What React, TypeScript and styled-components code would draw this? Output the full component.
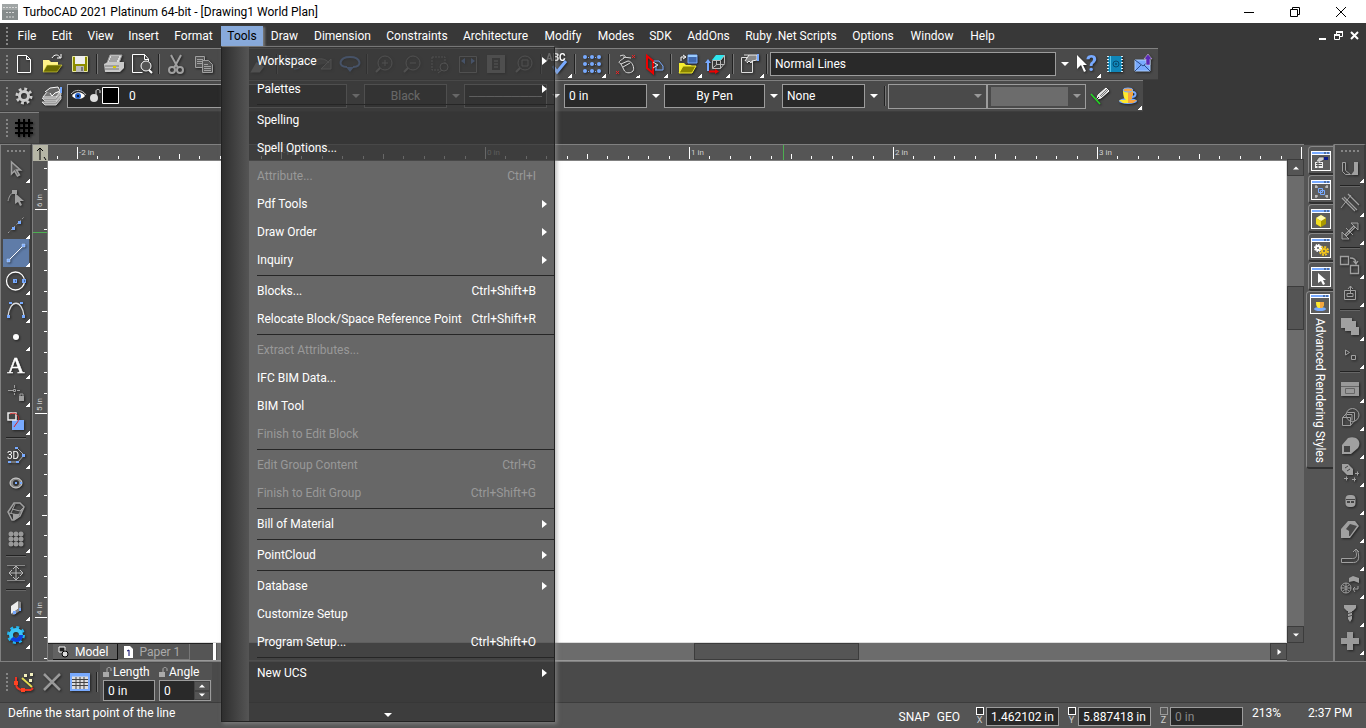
import React, { useState } from "react";
import styled, { createGlobalStyle, css } from "styled-components";

const c = {
  chrome: "#383838",
  bar: "#4a4a4a",
  panel: "#555555",
  line: "#808080",
  field: "#292929",
  fieldLine: "#9c9c9c",
  blue: "#78aaff",
  grey: "#a0a0a0",
};

const Global = createGlobalStyle`
  *, *::before, *::after { box-sizing: border-box; }
  html, body, #root { height: 100%; margin: 0; }
  body { overflow: hidden; background: ${c.chrome}; }
  body, button, input, select { font-family: Roboto, "Open Sans", sans-serif; font-size: 12px; line-height: 16px; color: #fff; }
  button { border: 0; padding: 0; background: none; }
  input, select { border-radius: 0; margin: 0; outline: 0; appearance: none; }
`;

const Shell = styled.div`
  display: flex;
  flex-direction: column;
  height: 100vh;
  overflow: hidden;
`;

/* ---------- title and menu bars ---------- */
const TitleBar = styled.header`
  display: flex;
  align-items: center;
  flex: none;
  height: 23px;
  padding: 0 2px;
  gap: 5px;
  background: #fff;
  color: #000;
`;
const Title = styled.h1`
  flex: 1;
  margin: 0;
  font-size: 12px;
  line-height: 16px;
  font-weight: 400;
`;
const WindowButtons = styled.div`
  display: flex;
`;
const WindowButton = styled.button<{ $w: number }>`
  display: grid;
  place-items: center;
  width: ${(p) => p.$w}px;
  height: 20px;
  color: inherit;
`;
const MenuBar = styled.nav`
  display: flex;
  align-items: center;
  flex: none;
  height: 25px;
  padding-right: 4px;
  background: ${c.chrome};
`;
const MenuSlot = styled.div`
  position: relative;
`;
const MenuButton = styled.button<{ $w: number; $open?: boolean }>`
  width: ${(p) => p.$w}px;
  height: 20px;
  text-align: center;
  white-space: nowrap;
  ${(p) =>
    p.$open &&
    css`
      background: #88aadb;
      color: #000;
      box-shadow: 2px 1px 2px #777;
    `}
`;
const Spacer = styled.div`
  flex: 1;
`;

const Menu = styled.div`
  position: absolute;
  z-index: 10;
  top: 20px;
  left: 0;
  width: 334px;
  display: flex;
  border: 1px solid #222;
  border-top-color: #777;
  box-shadow: 2px 2px 4px rgba(150, 150, 150, 0.6);
`;
const MenuGutter = styled.div`
  width: 27px;
  background: linear-gradient(90deg, #2e2e2e, #555);
`;
const MenuList = styled.ul`
  flex: 1;
  margin: 0;
  padding: 1px 0 0;
  list-style: none;
  background: rgba(54, 54, 54, 0.757);
`;
const MenuRow = styled.li`
  display: flex;
`;
const MenuItem = styled.button`
  flex: 1;
  display: flex;
  align-items: center;
  justify-content: space-between;
  height: 28px;
  padding: 0 6px 2px 8px;
  text-align: left;
  white-space: nowrap;
  &:disabled { color: #999; }
`;
const Shortcut = styled.span`
  padding-right: 12px;
`;
const MenuRule = styled.li`
  height: 3px;
  margin-left: 8px;
  border-top: 1px solid #262626;
`;
const MenuMore = styled.button`
  display: flex;
  align-items: flex-end;
  justify-content: center;
  width: 100%;
  height: 33px;
  padding: 0 28px 2px 0;
`;

/* ---------- toolbars ---------- */
const Toolbars = styled.div`
  display: flex;
  flex-direction: column;
  align-items: flex-start;
  flex: none;
  height: 96px;
`;
const Toolbar = styled.div`
  display: flex;
  align-items: center;
  height: 32px;
  padding-right: 1px;
  border-top: 1px solid ${c.line};
  border-bottom: 1px solid #3e3e3e;
  background: ${c.bar};
`;
const Grip = styled.span<{ $across?: boolean }>`
  flex: none;
  ${(p) =>
    p.$across
      ? css`
          width: 18px;
          height: 2px;
          margin: 5px 5px 3px;
          background: repeating-linear-gradient(90deg, #858585 0 2px, transparent 2px 4px);
        `
      : css`
          width: 2px;
          height: 18px;
          margin: 0 2px 0 6px;
          background: repeating-linear-gradient(#858585 0 2px, transparent 2px 4px);
        `}
`;
const ToolSlot = styled.button<{ $active?: boolean }>`
  position: relative;
  display: grid;
  place-items: center;
  flex: none;
  width: 28px;
  height: 28px;
  ${(p) =>
    p.$active &&
    css`
      background: #5f7ca8;
      background-clip: content-box;
      padding: 0 1px;
    `}
`;
const Corner = styled.i`
  position: absolute;
  right: 0;
  bottom: 0;
  width: 4px;
  height: 4px;
  background: linear-gradient(135deg, transparent 50%, #fff 50%);
`;
const Divider = styled.span<{ $across?: boolean }>`
  flex: none;
  ${(p) =>
    p.$across
      ? css`
          width: 20px;
          height: 2px;
          margin: 2px 4px;
          border-top: 1px solid #222;
          border-bottom: 1px solid #666;
        `
      : css`
          width: 2px;
          height: 20px;
          margin: 0 2px;
          border-left: 1px solid #222;
          border-right: 1px solid #777;
        `}
`;
const Field = styled.select<{ $w: number; $center?: boolean }>`
  width: ${(p) => p.$w}px;
  height: 24px;
  padding: 0 4px;
  border: 1px solid ${c.fieldLine};
  background: ${c.field};
  text-align-last: ${(p) => (p.$center ? "center" : "left")};
`;
const ArrowBox = styled.span<{ $dim?: boolean }>`
  display: grid;
  place-items: center;
  width: 17px;
  height: 24px;
  flex: none;
  color: ${(p) => (p.$dim ? "#999" : "#fff")};
`;
const LayerField = styled.div`
  display: flex;
  align-items: center;
  width: 280px;
  height: 24px;
  gap: 1px;
  margin-left: 1px;
  padding-left: 2px;
  border: 1px solid ${c.fieldLine};
  background: ${c.field};
`;
const LayerSelect = styled.select`
  flex: 1;
  height: 22px;
  padding: 0 8px;
  border: 0;
  background: transparent;
`;
const Boxed = styled.div`
  display: flex;
  align-items: center;
  width: 99px;
  height: 25px;
  padding-left: 3px;
  border: 1px solid ${c.fieldLine};
`;
const BoxedSelect = styled.select<{ $fill?: boolean }>`
  flex: 1;
  min-width: 0;
  height: 19px;
  border: 0;
  background: ${(p) => (p.$fill ? "#7a7a7a" : "transparent")};
`;

/* ---------- work area ---------- */
const Work = styled.div`
  display: flex;
  flex: 1;
  min-height: 0;
`;
const SideBar = styled.div`
  display: flex;
  flex-direction: column;
  align-items: center;
  flex: none;
  width: 32px;
  padding-left: 1px;
  border-top: 1px solid ${c.line};
  border-left: 1px solid ${c.line};
  border-right: 2px solid #3c3c3c;
  background: ${c.bar};
`;
const Drawing = styled.main`
  display: grid;
  flex: 1;
  min-width: 0;
  grid-template-columns: 15px 1fr 17px;
  grid-template-rows: 16px 1fr 18px;
  border-top: 1px solid ${c.line};
  border-left: 1px solid ${c.line};
  background: ${c.panel};
`;
const RulerCorner = styled.div`
  display: grid;
  place-items: center;
  background: #b5b5a5;
`;
const RulerTop = styled.div`
  grid-column: 2 / 4;
  overflow: hidden;
  border-bottom: 1px solid ${c.line};
`;
const RulerLeft = styled.div`
  grid-row: 2 / 4;
  overflow: hidden;
  border-right: 1px solid ${c.line};
`;
const Canvas = styled.div`
  background: #fff;
  border-right: 1px solid #ddd;
  border-bottom: 1px solid #ddd;
`;
const ScrollV = styled.div`
  display: flex;
  flex-direction: column;
  margin-top: -2px;
  background: #6c6c6c;
`;
const ScrollButton = styled.button`
  display: grid;
  place-items: center;
  flex: none;
  width: 17px;
  height: 17px;
  border: 1px solid #3c3c3c;
  background: ${c.panel};
`;
const ThumbV = styled.div`
  flex: none;
  height: 44px;
  border: 1px solid #3c3c3c;
  background: ${c.panel};
`;
const ThumbH = styled.div`
  flex: none;
  width: 165px;
  border: 1px solid #3c3c3c;
  background: ${c.panel};
`;
const Grow = styled.div<{ $n: number }>`
  flex: ${(p) => p.$n};
`;
const SheetBar = styled.div`
  display: flex;
  min-width: 0;
  border-bottom: 1px solid #999;
`;
const SheetTabs = styled.div`
  display: flex;
  align-items: flex-start;
  width: 165px;
  padding-left: 5px;
  border-top: 1px solid #222;
`;
const SheetTab = styled.button<{ $on?: boolean }>`
  display: flex;
  align-items: center;
  gap: 4px;
  height: 16px;
  padding: 0 9px 0 4px;
  border-right: 1px solid ${(p) => (p.$on ? "#111" : "#777")};
  border-bottom: 1px solid ${(p) => (p.$on ? "#111" : "#777")};
  background: ${(p) => (p.$on ? "#626262" : c.panel)};
  color: ${(p) => (p.$on ? "#fff" : "#aaa")};
`;
const Splitter = styled.div`
  width: 3px;
  margin-right: 1px;
  background: #fff;
`;
const ScrollH = styled.div`
  display: flex;
  flex: 1;
  background: #6c6c6c;
`;

const PaletteRail = styled.div`
  display: flex;
  flex-direction: column;
  align-items: flex-end;
  flex: none;
  width: 30px;
  padding-top: 1px;
  border-top: 1px solid #3c3c3c;
  border-right: 1px solid ${c.line};
  background: ${c.panel};
`;
const PaletteTab = styled.button<{ $on?: boolean }>`
  display: flex;
  align-items: center;
  gap: 4px;
  flex: none;
  writing-mode: vertical-rl;
  width: ${(p) => (p.$on ? 27 : 25)}px;
  height: ${(p) => (p.$on ? 178 : 29)}px;
  padding-top: ${(p) => (p.$on ? 2 : 4)}px;
  border-top: 1px solid #888;
  border-left: 1px solid #888;
  border-bottom: 2px solid #303030;
  border-radius: 4px 0 0 4px;
  white-space: nowrap;
`;

/* ---------- inspector and status ---------- */
const Inspector = styled.div`
  display: flex;
  align-items: center;
  flex: none;
  height: 42px;
  border-top: 1px solid ${c.line};
  border-bottom: 1px solid #3c3c3c;
  background: ${c.bar};
`;
const Params = styled.div`
  display: flex;
  gap: 4px;
  height: 38px;
  padding: 1px 1px 0 3px;
  background: #525252;
`;
const Param = styled.label`
  display: flex;
  flex-direction: column;
  width: 52px;
`;
const ParamName = styled.span`
  display: flex;
  align-items: center;
  gap: 1px;
  height: 16px;
  white-space: nowrap;
`;
const ParamBox = styled.span`
  display: flex;
  height: 21px;
  border: 1px solid ${c.fieldLine};
  background: ${c.field};
`;
const BareInput = styled.input`
  flex: 1;
  min-width: 0;
  padding: 0 4px;
  border: 0;
  background: transparent;
`;
const Spin = styled.span`
  display: flex;
  flex-direction: column;
  width: 16px;
  background: ${c.panel};
`;
const SpinHalf = styled.span`
  display: grid;
  flex: 1;
  place-items: center;
  border: 1px solid #444;
`;
const StatusBar = styled.footer`
  display: flex;
  align-items: flex-start;
  flex: none;
  height: 25px;
  padding: 2px 16px 0 8px;
  background: ${c.panel};
`;
const StatusMode = styled.button`
  height: 22px;
  margin: 1px 7px 0 0;
`;
const Coord = styled.div`
  display: flex;
  gap: 2px;
  margin: 2px 0 0 8px;
  height: 20px;
`;
const CoordLock = styled.label`
  display: flex;
  flex-direction: column;
  align-items: center;
  width: 9px;
  font-size: 9px;
  line-height: 10px;
  color: #ccc;
`;
const Check = styled.input`
  flex: none;
  width: 8px;
  height: 8px;
  border: 1px solid #fff;
  background: #333;
  &:disabled { border-color: #999; background: none; }
`;
const CoordInput = styled.input`
  width: 73px;
  height: 19px;
  padding: 0 4px;
  border: 1px solid ${c.fieldLine};
  background: ${c.field};
  &:disabled { color: #888; }
`;
const Zoom = styled.span`
  width: 56px;
  margin-left: 9px;
`;
const Clock = styled.span`
  width: 42px;
  white-space: nowrap;
`;

/* ---------- drawings ---------- */
const Glyph = styled.svg`
  display: block;
  flex: none;
  overflow: visible;
  filter: drop-shadow(1px 1px 1px rgba(0, 0, 0, 0.55));
`;
const Plain = styled.svg`
  display: block;
  flex: none;
`;

const B = c.blue;
const G = c.grey;
const mag = (
  <>
    <circle cx="13" cy="11" r="7" stroke={G} fill="none" />
    <path d="M8 16L4 20" stroke={G} strokeWidth="2" />
  </>
);
const icons: Record<string, React.ReactNode> = {
  new: <path d="M5.500 3.500h9l4 4v13h-13zM14.500 3.500v4h4" fill="none" stroke="#fff" />,
  open: (
    <>
      <path d="M3 20V8h6l2 2h7v4" fill="#fff38a" />
      <path d="M3 20l4-7h15l-5 7z" fill="#6b6b00" stroke="#e8e04a" strokeWidth=".6" />
      <path d="M12 6c2-4 7-4 8 0M17 6h4V2" fill="none" stroke="#fff" />
    </>
  ),
  save: (
    <>
      <path d="M4.500 4.500h15v15h-15z" fill="#8c8c00" stroke="#e9e9a0" />
      <path d="M7 4h10v8H7z" fill="#eee" />
      <path d="M8 14h8v6H8z" fill="#bbb" />
      <path d="M13 15h2v4h-2z" fill="#777" />
    </>
  ),
  print: (
    <>
      <path d="M8 3h12l-3 8H5z" fill="#ddd" stroke="#999" />
      <path d="M9 5h8M8 7h8M7 9h8" stroke="#666" />
      <path d="M2 12l4-2h16v6l-4 4H3z" fill="#c9c9c9" />
      <path d="M3 14h14M3 17h14" stroke="#777" />
      <path d="M11 15h3" stroke="#d8c800" strokeWidth="2" />
    </>
  ),
  preview: (
    <>
      <path d="M18.500 9V7l-4-4.500h-12v18h10M14.500 2.500v5h4" fill="none" stroke="#fff" />
      <circle cx="16" cy="14" r="5" fill="#555" stroke="#fff" />
      <path d="M19 18l3 3" stroke="#fff" strokeWidth="2" />
    </>
  ),
  cut: (
    <>
      <path d="M7 3l7 13M17 3l-7 13" stroke={G} strokeWidth="2" />
      <circle cx="8" cy="18" r="3" fill="none" stroke={G} strokeWidth="2" />
      <circle cx="16" cy="18" r="3" fill="none" stroke={G} strokeWidth="2" />
    </>
  ),
  copy: (
    <>
      <path d="M3.500 4.500h9v11h-9z" fill="#555" stroke={G} />
      <path d="M5 7.500h6M5 9.500h6M5 11.500h6" stroke={G} />
      <path d="M10.500 8.500h6l4 4v8h-10z" fill="#555" stroke={G} />
      <path d="M12 12.500h4M12 14.500h7M12 16.500h7M12 18.500h7" stroke={G} />
    </>
  ),
  paste: <path d="M5 5h12v15H5zM8 3h6v4H8z" fill="none" stroke={G} />,
  brush: <path d="M20 4l-8 8M5 19l4-7 5 3-3 4z" fill={G} stroke={G} strokeWidth="3" />,
  undo: <path d="M4 10c4-6 16-6 16 1 0 4-4 6-8 6M4 3v8h8" fill="none" stroke={B} />,
  redo: <path d="M3 14c0-9 12-9 16-3M21 7v10H11z" fill={G} fillOpacity=".4" stroke={G} />,
  loop: (
    <>
      <path d="M9 15C-1 15 1 5 12 5s13 10 3 10" fill="none" stroke={B} strokeWidth="2" />
      <path d="M8 15h8l-4 5z" fill={B} />
    </>
  ),
  zoomIn: <>{mag}<path d="M10 11h6M13 8v6" stroke={G} /></>,
  zoomOut: <>{mag}<path d="M10 11h6" stroke={G} /></>,
  zoomWin: (
    <>
      <path d="M4 5h13v8M4 5v13h8" fill="none" stroke={G} strokeDasharray="2 1" />
      <circle cx="16" cy="15" r="4" fill="none" stroke={G} />
      <path d="M14 18l-4 3" stroke={G} />
    </>
  ),
  extents: (
    <>
      <path d="M3.500 4.500h17v16h-17z" fill="none" stroke={G} />
      <path d="M9 6L5 9l4 3zM15 6l4 3-4 3z" fill={B} />
    </>
  ),
  page: (
    <>
      <path d="M3 3h18v18H3z" fill="#9a9a9a" />
      <path d="M8 6h8v12H8z" fill="#444" />
      <path d="M10 9h4M10 12h4M10 15h4" stroke="#bbb" />
    </>
  ),
  zoomSel: <>{mag}<path d="M10 8h6v6h-6z" fill="none" stroke={G} /></>,
  spell: (
    <>
      <text x="0" y="9" fontSize="10" fontWeight="700" fill="#fff">ABC</text>
      <path d="M7 14l4 6 9-11" fill="none" stroke={B} strokeWidth="3" />
    </>
  ),
  grid: (
    <g fill={B}>
      {[5, 12, 19].map((y) => [5, 12, 19].map((x) => <circle key={`${x}-${y}`} cx={x} cy={y} r="2" />))}
      {[5, 12, 19].map((y) => [8, 15].map((x) => <rect key={`${x}${y}`} x={x} y={y} width="1" height="1" />))}
    </g>
  ),
  mouse: (
    <>
      <path d="M7 12l7-3c4 0 7 7 5 10-3 3-8 2-9-1zM9 15l7-4M6 4c4-2 7 0 4 2-4 3-7 4-3 6M9 5l8 1" fill="none" stroke="#ddd" />
      <path d="M18 3l3 3m0-3l-3 3M2 19l3 3m0-3l-3 3" stroke="#e22" />
    </>
  ),
  plane: (
    <>
      <path d="M11 9h6l4 5v4h-8M14 12v6" fill="none" stroke={B} />
      <path d="M5 4l6 5v12l-6-5z" fill="none" stroke="#e00" strokeWidth="2" />
      <path d="M11 10l5 3-5 3" stroke="#ddd" fill="none" />
    </>
  ),
  folderWin: (
    <>
      <path d="M12 3h9v8h-9z" fill="#4169ad" stroke={B} />
      <path d="M12 4h9" stroke="#9cf" strokeWidth="2" />
      <path d="M3 21V11h5l2 2h6" fill="#f5ee30" />
      <path d="M3 21l4-7h13l-4 7z" fill="#8a8500" stroke="#f5ee30" />
      <path d="M5 9V5h4M7 3l3 2-3 2" fill="none" stroke="#fff" />
    </>
  ),
  cube: (
    <>
      <path d="M8 8l4-5h9l-4 5z" fill="#2fe6ef" />
      <path d="M8.500 8.500h8v8h-8zM16.500 8.500l4-5v8l-4 5M12.500 9v4l-4 3M12.500 12.500h8" fill="none" stroke="#bbb" />
      <path d="M4 9v10" stroke={B} strokeWidth="2" />
      <path d="M1 11l3-4 3 4z" fill={B} />
      <path d="M5 19.500h7" stroke="#e00" strokeWidth="2" />
      <path d="M11 17l4 2.500-4 2.500z" fill="#e00" />
    </>
  ),
  clipboard: (
    <>
      <path d="M3.500 5.500h11v15h-11zM6 3h5v4" fill="none" stroke="#ddd" />
      <path d="M7 9l4-6h8v5l-5 1-1 2-2-2-2 2" fill="#888" stroke="#eee" />
      <path d="M20 2v7" stroke={B} strokeWidth="2" />
    </>
  ),
  help: (
    <>
      <path d="M2 3v14l4-4 3 7 2-1-3-6h4z" fill="#fff" />
      <text x="11" y="19" fontSize="22" fontWeight="700" fill={B}>?</text>
    </>
  ),
  book: (
    <>
      <path d="M5 4h14v16H5z" fill="#0f86b8" />
      <path d="M5 4v16M19 4v16" stroke="#d8eef8" strokeWidth="2" strokeDasharray="1 2" />
      <path d="M7.500 4v16" stroke="#56c4ea" />
      <circle cx="13" cy="12" r="3" fill="none" stroke="#064a70" />
      <circle cx="13" cy="12" r="1" fill="#064a70" />
    </>
  ),
  mail: (
    <>
      <path d="M4 8h15v11H4z" fill={B} stroke="#adcfff" />
      <path d="M4 8l8 6 7-6M4 19l6-6M19 19l-6-6" fill="none" stroke="#2a4d8c" />
      <path d="M15 13V7h-2l4-5 4 5h-2v6z" fill="#5a28b8" stroke="#ddd" strokeWidth=".5" />
    </>
  ),
  gear: (
    <>
      <circle cx="12" cy="12" r="7" fill="none" stroke="#ccc" strokeWidth="3" strokeDasharray="2.750 2.750" />
      <circle cx="12" cy="12" r="4.500" fill="none" stroke="#ccc" strokeWidth="3" />
    </>
  ),
  layers: (
    <>
      <path d="M2 18h14l5-6v3l-5 6H5zM2 14h14l5-6v3l-5 6H5z" fill="#999" stroke="#eee" strokeWidth=".8" />
      <path d="M3 13l4-5h13l-4 5z" fill="#777" stroke="#eee" />
      <path d="M5 8l5-4 8-1 2 4-5 2-3 3-2-3" fill="#666" stroke="#fff" />
      <path d="M21 3v6" stroke={B} strokeWidth="2" />
    </>
  ),
  pencil: (
    <>
      <path d="M3 10l9 10" stroke="#2d2" strokeWidth="1.500" />
      <path d="M9 15l1-4 8-7 3 3-8 7z" fill="#ddd" stroke="#fff" />
      <path d="M12 12l7-7M13 13l7-7" stroke="#777" />
      <path d="M9 15l2-2" stroke="#222" strokeWidth="1" />
    </>
  ),
  cup: (
    <>
      <ellipse cx="12" cy="17" rx="9" ry="3" fill={B} />
      <path d="M3 16h9v3H7z" fill="#ffe92e" />
      <path d="M12 16h9l-4 3h-5z" fill="#f6a540" />
      <path d="M7 6h10c0 7-1 9-3 10H10c-2-1-3-4-3-10z" fill="#ffe92e" />
      <path d="M12 8h5c0 6-1 7-3 8h-2z" fill="#f6a540" />
      <ellipse cx="12" cy="6" rx="5" ry="2" fill="#f6a540" stroke={B} />
      <path d="M17 8c4 0 3 5-1 5" fill="none" stroke={B} strokeWidth="2" />
    </>
  ),
  hash: <path d="M7 3v18M12 3v18M17 3v18M3 7h18M3 12h18M3 17h18" stroke="#000" strokeWidth="2" />,
  /* left rail */
  select: <path d="M7.500 5v12l3-3 3 5 2-1-3-5h4z" fill="#555" stroke={G} strokeWidth="1.500" />,
  node: (
    <>
      <path d="M10 7c-4 2-5 5-6 9" fill="none" stroke={G} />
      <path d="M8 5h5v4H8z" fill={G} />
      <path d="M11 8v11l3-2 2 4 2-1-2-4h4z" fill={G} />
    </>
  ),
  construct: (
    <>
      <path d="M4 20L20 4" stroke={G} strokeDasharray="2 2" />
      <path d="M8 14h3v3H8zM14 8h3v3h-3z" fill={B} />
    </>
  ),
  line: (
    <>
      <path d="M5 19L19 5" stroke="#fff" />
      <path d="M3 18h3v3H3zM18 3h3v3h-3z" fill={B} stroke="#cfe2ff" strokeWidth=".5" />
    </>
  ),
  circle: (
    <>
      <circle cx="11.500" cy="12" r="9" fill="none" stroke="#fff" strokeWidth="1.300" />
      <path d="M9 10h4v4H9zM18 10h4v4h-4z" fill={B} />
      <path d="M11 12h1M20 12h1" stroke="#124" />
    </>
  ),
  arc: (
    <>
      <path d="M4 19C6 2 18 2 20 19" fill="none" stroke="#ddd" strokeWidth="1.300" />
      <path d="M3 18h3v3H3zM18 18h3v3h-3zM5 5h3v2H5zM16 5h3v2h-3z" fill={B} />
    </>
  ),
  point: <circle cx="12" cy="12" r="3" fill="#fff" />,
  text: (
    <text x="12" y="20" textAnchor="middle" fontFamily="Liberation Serif, serif" fontSize="24" fill="#fff" stroke="#fff" strokeWidth=".5">A</text>
  ),
  snap: (
    <>
      <path d="M4 9.500h5M13 9.500h3M10.500 4v3M10.500 12v2M9.500 8.500h2v2h-2z" fill="none" stroke={G} />
      <path d="M15 15h5v5h-5z" fill={G} />
      <path d="M16 15v-2h3v2" fill="none" stroke={G} />
    </>
  ),
  modify: (
    <>
      <path d="M8 11h12v10H8z" fill={B} />
      <path d="M4 4h8v7H4z" fill="#444" stroke="#eee" strokeWidth="1.500" />
      <path d="M6 5c7-3 12 4 6 10l-2 3" fill="none" stroke="#d22" />
    </>
  ),
  three: (
    <>
      <text x="3" y="16" fontSize="10" fill="#fff">3D</text>
      <path d="M14 6l6 6-6 7H5" fill="none" stroke="#aaa" />
      <path d="M11 4h3v2h-3zM18 11h3v3h-3zM12 18h3v2h-3zM4 18h3v2H4z" fill={B} />
    </>
  ),
  sphere: (
    <>
      <ellipse cx="12" cy="12" rx="6" ry="5" fill="#8a8a8a" stroke="#ddd" />
      <circle cx="12" cy="12" r="3" fill="#333" />
      <path d="M11 11h2v2h-2zM16 11h2v2h-2z" fill={B} />
    </>
  ),
  solid: (
    <>
      <path d="M4 13L10 4h6l4 4-4 9-6 4H8z" fill="none" stroke={G} strokeWidth="1.500" />
      <path d="M8 10l8 2 4-4M5 14l9 2 4-5M11 5l-4 9" fill="none" stroke={G} />
      <path d="M9 15h7l-2 4-5 2z" fill={G} />
    </>
  ),
  dots: (
    <g fill="#999">
      {[7, 12, 17].map((y) => [7, 12, 17].map((x) => <circle key={`${x}-${y}`} cx={x} cy={y} r="2.500" />))}
    </g>
  ),
  move: (
    <>
      <path d="M3 4.500h18M3 19.500h18" stroke="#888" />
      <path d="M12 6v12M6 12h12M9 8l3-3 3 3M9 16l3 3 3-3M8 9l-3 3 3 3M16 9l3 3-3 3" fill="none" stroke="#bbb" />
    </>
  ),
  slab: (
    <>
      <path d="M7 11l7-5v8l-7 5z" fill="#eee" />
      <path d="M14 6l3 1v8l-7 5-3-1 7-5z" fill="#888" />
      <path d="M9 16h3v3H9zM15 13h2v3h-2z" fill={B} />
    </>
  ),
  bigGear: (
    <>
      <circle cx="12" cy="12" r="7.500" fill="none" stroke="#23b5ef" strokeWidth="3" strokeDasharray="2.950 2.940" />
      <circle cx="12" cy="12" r="5" fill="none" stroke="#3cc4f5" strokeWidth="4" />
      <path d="M8 15a5 5 0 0 0 9-3" fill="none" stroke="#0b3fe0" strokeWidth="4" />
    </>
  ),
  /* right rail */
  chamfer: (
    <>
      <path d="M4.500 5.500h3v8l5 4h-5l-3-3z" fill="none" stroke={G} />
      <path d="M20 5v13h-7l3-4V5z" fill={G} />
    </>
  ),
  parallel: (
    <>
      <path d="M4 7l13 13M6 6l13 13M10 3l11 11" fill="none" stroke={G} strokeWidth="1.300" />
      <path d="M3 17L13 4" stroke={G} />
    </>
  ),
  stretch: (
    <>
      <path d="M6 18L18 6" stroke={G} strokeWidth="3" />
      <path d="M6.500 17.500L17.500 6.500" stroke="#4a4a4a" />
      <path d="M4 13v7h7zM13 4h7v7z" fill="#4a4a4a" stroke={G} />
      <path d="M8 9l7 7" stroke={G} />
    </>
  ),
  blockMove: <path d="M2.500 3.500h8v8h-8zM12.500 12.500h8v8h-8zM12 5c4 0 6 2 6 5M15.500 8l2.500 3 2-3" fill="none" stroke={G} strokeWidth="1.300" />,
  insert: <path d="M6.500 9.500h11v9h-11zM9 12.500h6v3H9zM12.500 13V5M10 8l2.500-3L15 8" fill="none" stroke={G} />,
  union: (
    <>
      <path d="M3 3h11v10H3zM7 6h11v10H7zM13 12h8v8h-8z" fill={G} />
    </>
  ),
  smallPair: <path d="M7.500 7v5l4-2.500zM13.500 12.500h4v4h-4z" fill="none" stroke={G} />,
  panel: (
    <>
      <path d="M3 5h18v14H3z" fill="#999" />
      <path d="M3 9.500h18M7.500 11.500h9v5h-9z" fill="none" stroke="#666" />
    </>
  ),
  circSq: (
    <>
      <circle cx="14.500" cy="10" r="6.500" fill="none" stroke={G} />
      <path d="M4.500 12.500h8v8h-8zM4.500 12.500l5-5h7v8l-4 5M9 9.500h5v6" fill="none" stroke={G} />
    </>
  ),
  roundSq: (
    <>
      <path d="M4 12l6-7c9-3 14 4 10 10l-7 6H4z" fill={G} />
      <path d="M6 13h6v6H6z" fill="#444" />
    </>
  ),
  tag: (
    <>
      <path d="M4 3h6l5 5v6H9L4 9z" fill={G} />
      <path d="M7 7l3-2M9 10l3-2" stroke="#444" />
      <path d="M6 17.500h4M8.500 15.500v4M14 18.500h4M16.500 16.500v4M17 12.500h4M19.500 10.500v4" stroke={G} />
    </>
  ),
  barrel: (
    <>
      <rect x="7.500" y="6" width="10" height="12" rx="4" fill={G} />
      <path d="M8 10.500h9" stroke="#444" />
      <path d="M9 12h3v2H9zM13 12h3v2h-3z" fill="#444" />
    </>
  ),
  wedge: (
    <>
      <path d="M3 12l7-8h7l4 5-9 12H3z" fill={G} />
      <path d="M12 7l7 2-7 10h-1v-5l-3-2z" fill="#484848" />
    </>
  ),
  pipe: <path d="M3.500 13.500h11c4 0 5-3 3-8M3.500 17.500h12c6 0 6-6 4-12l-2-1M3.500 13.500v4M15 7l3-3 3 3" fill="none" stroke={G} />,
  globe: (
    <>
      <circle cx="8" cy="15" r="5" fill="none" stroke={G} />
      <path d="M3 15h10M8 10v10M5 12c2 2 4 2 6 0M5 18c2-2 4-2 6 0" fill="none" stroke={G} />
      <path d="M11 5l4-2 6 2v5l-5-2-5 1z" fill={G} />
      <path d="M20 13v3h-5M17 14l-2 2 2 3" fill="none" stroke={G} />
    </>
  ),
  screw: (
    <>
      <path d="M6 4h12v3l-3 3H9L6 7z" fill={G} />
      <path d="M10 10h4v8l-2 3-2-3z" fill={G} />
      <path d="M9 13l6-2M9 16l6-2" stroke="#4a4a4a" />
    </>
  ),
  plus: <path d="M9 3h6v6h6v6h-6v6H9v-6H3V9h6z" fill="#999" />,
  /* inspector */
  polyTool: (
    <>
      <path d="M4 7v6c0 5 3 7 7 7h8M19 20l2-2" fill="none" stroke="#e32" strokeWidth="2" />
      <path d="M2 11h4v4H2zM9 18h4v4H9z" fill="#f42" />
      <path d="M10 8l10 9" stroke="#e0da50" strokeWidth="2" />
      <path d="M12 4h3v3h-3zM18 3h3v3h-3zM17 9h3v3h-3z" fill="#f3f0c0" />
    </>
  ),
  cross: <path d="M4 4l16 16M20 4L4 20" stroke="#999" strokeWidth="2.500" />,
  table: (
    <>
      <path d="M3 4h18v16H3z" fill="#ddd" stroke={B} strokeWidth="2" />
      <path d="M3 5h18" stroke={B} strokeWidth="3" />
      <path d="M4 9.500h16M4 12.500h16M4 15.500h16M8 7v12M12 7v12M16 7v12" stroke="#444" />
    </>
  ),
};

type ToolDef = [name: string, label: string, more?: boolean];
const SEP = "|";
type Entry = ToolDef | typeof SEP;

function Tool({ def, active }: { def: ToolDef; active?: boolean }) {
  return (
    <ToolSlot type="button" aria-label={def[1]} $active={active}>
      <Glyph width="24" height="24" viewBox="0 0 24 24">{icons[def[0]]}</Glyph>
      {def[2] && <Corner />}
    </ToolSlot>
  );
}
function Tools({ list, across, active }: { list: Entry[]; across?: boolean; active?: string }) {
  return (
    <>
      {list.map((e, i) =>
        e === SEP ? <Divider key={i} $across={across} /> : <Tool key={i} def={e} active={e[0] === active} />
      )}
    </>
  );
}

const Tri = ({ dir = "down", small }: { dir?: "down" | "up" | "right"; small?: boolean }) => {
  const d = { down: "M0 2h8L4 6z", up: "M0 6h8L4 2z", right: "M2 0l5 4-5 4z" }[dir];
  const s = small ? 6 : 8;
  return (
    <Plain width={s} height={s} viewBox="0 0 8 8" aria-hidden="true">
      <path d={d} fill="currentColor" />
    </Plain>
  );
};

const standardTools: Entry[] = [
  ["new", "New"], ["open", "Open"], ["save", "Save"], SEP,
  ["print", "Print"], ["preview", "Print preview"], SEP,
  ["cut", "Cut"], ["copy", "Copy"], ["paste", "Paste"], ["brush", "Format painter"], SEP,
  ["undo", "Undo"], ["redo", "Redo"], ["loop", "Repeat"], SEP,
  ["zoomIn", "Zoom in"], ["zoomOut", "Zoom out"], ["zoomWin", "Zoom window"],
  ["extents", "Zoom extents"], ["page", "Zoom page"], ["zoomSel", "Zoom selection"], SEP,
  ["spell", "Spelling", true], SEP, ["grid", "Grid", true], SEP,
  ["mouse", "Select by mouse", true], ["plane", "Workplane", true], SEP,
  ["folderWin", "Open window", true], ["cube", "Views", true], SEP,
  ["clipboard", "Properties", true], SEP,
];
const drawTools: Entry[] = [
  ["select", "Select", true], ["node", "Edit node"], ["construct", "Construction", true],
  ["line", "Line", true], ["circle", "Circle", true], ["arc", "Curve", true],
  ["point", "Point", true], ["text", "Text", true], ["snap", "Snap", true],
  ["modify", "Modify", true], SEP,
  ["three", "3D polyline", true], ["sphere", "Sphere", true], ["solid", "Solid", true],
  ["dots", "Array", true], SEP, ["move", "Move", true], SEP,
  ["slab", "Slab", true], ["bigGear", "Settings", true],
];
const modifyTools: Entry[] = [
  ["chamfer", "Chamfer", true], SEP, ["parallel", "Trim", true], ["stretch", "Stretch", true], SEP,
  ["blockMove", "Copy block", true], ["insert", "Insert", true], SEP,
  ["union", "Union", true], ["smallPair", "Align", true], SEP,
  ["panel", "Panel", true], ["circSq", "Intersect", true], ["roundSq", "Subtract", true],
  ["tag", "Tag", true], ["barrel", "Shell", true], ["wedge", "Slice", true],
  ["pipe", "Bend", true], ["globe", "Transform", true], ["screw", "Thread", true], ["plus", "Add", true],
];

const menusBefore: [string, number][] = [
  ["File", 34], ["Edit", 36], ["View", 41], ["Insert", 45], ["Format", 55],
];
const menusAfter: [string, number][] = [
  ["Draw", 43], ["Dimension", 73], ["Constraints", 76], ["Architecture", 81], ["Modify", 54],
  ["Modes", 52], ["SDK", 37], ["AddOns", 59], ["Ruby .Net Scripts", 106], ["Options", 58],
  ["Window", 60], ["Help", 41],
];

type Command = { label: string; keys?: string; sub?: boolean; off?: boolean } | null;
const toolsMenu: Command[] = [
  { label: "Workspace", sub: true },
  { label: "Palettes", sub: true },
  null,
  { label: "Spelling" },
  { label: "Spell Options..." },
  { label: "Attribute...", keys: "Ctrl+I", off: true },
  { label: "Pdf Tools", sub: true },
  { label: "Draw Order", sub: true },
  { label: "Inquiry", sub: true },
  null,
  { label: "Blocks...", keys: "Ctrl+Shift+B" },
  { label: "Relocate Block/Space Reference Point", keys: "Ctrl+Shift+R" },
  null,
  { label: "Extract Attributes...", off: true },
  { label: "IFC BIM Data..." },
  { label: "BIM Tool" },
  { label: "Finish to Edit Block", off: true },
  null,
  { label: "Edit Group Content", keys: "Ctrl+G", off: true },
  { label: "Finish to Edit Group", keys: "Ctrl+Shift+G", off: true },
  null,
  { label: "Bill of Material", sub: true },
  null,
  { label: "PointCloud", sub: true },
  null,
  { label: "Database", sub: true },
  { label: "Customize Setup" },
  { label: "Program Setup...", keys: "Ctrl+Shift+O" },
  null,
  { label: "New UCS", sub: true },
];

function ToolsMenu() {
  return (
    <Menu>
      <MenuGutter />
      <MenuList>
        {toolsMenu.map((m, i) =>
          m ? (
            <MenuRow key={i}>
              <MenuItem type="button" disabled={m.off}>
                {m.label}
                {m.keys && <Shortcut>{m.keys}</Shortcut>}
                {m.sub && <Tri dir="right" />}
              </MenuItem>
            </MenuRow>
          ) : (
            <MenuRule key={i} />
          )
        )}
        <li>
          <MenuMore type="button" aria-label="More commands"><Tri /></MenuMore>
        </li>
      </MenuList>
    </Menu>
  );
}

/* One inch on the rulers spans 204 px and is split in ten. */
const INCH = 204;
const tickLength = (i: number) => (i % 10 === 0 ? 12 : i % 5 === 0 ? 5 : 3);
function TopRuler() {
  const start = 29;
  return (
    <Plain width="100%" height="15" aria-hidden="true">
      {Array.from({ length: 140 }, (_, i) => i - 1).map((i) => (
        <rect
          key={i}
          x={Math.round(start + (i * INCH) / 10)}
          y={14 - tickLength(i)}
          width="1"
          height={tickLength(i)}
          fill="#fff"
        />
      ))}
      {[-2, -1, 0, 1, 2, 3].map((n) => (
        <text key={n} x={start + 2 + (n + 2) * INCH} y="10" fontSize="8" fill="#d0d0d0">{n} in</text>
      ))}
      <rect x="735" y="0" width="1" height="15" fill="#4caf50" />
    </Plain>
  );
}
function LeftRuler() {
  const start = 48;
  return (
    <Plain width="14" height="100%" aria-hidden="true">
      {Array.from({ length: 80 }, (_, i) => i - 2).map((i) => (
        <rect
          key={i}
          x={14 - tickLength(i)}
          y={Math.round(start + (i * INCH) / 10)}
          width={tickLength(i)}
          height="1"
          fill="#fff"
        />
      ))}
      {[6, 5, 4].map((n) => (
        <text key={n} transform={`translate(9 ${start - 2 + (6 - n) * INCH}) rotate(-90)`} fontSize="8" fill="#d0d0d0">
          {n} in
        </text>
      ))}
      <rect x="0" y="71" width="14" height="1" fill="#4caf50" />
    </Plain>
  );
}

const paletteArt: [string, React.ReactNode][] = [
  ["Properties", <g key="a"><path d="M4 11h8v6H4z" fill="#eee" /><path d="M5 12.500h6M5 14.500h6M7 11v6" stroke="#555" /><path d="M5 10l3-4h5v3l-4 2" fill="#ccc" stroke="#222" strokeWidth=".6" /><path d="M13 6h4v3h-4z" fill="#0a1a8a" /></g>],
  ["Blocks", <g key="b" fill="none"><path d="M7.500 8.500h4v4h-4zM9.500 10.500h4v4h-4z" stroke={B} /><path d="M4 7h3M5 5v3M14 7h3M16 5v3M4 16h3M5 15v3M14 16h3M16 15v3" stroke="#ddd" /></g>],
  ["Materials", <g key="c"><path d="M10 6l5 3v6l-5 3-5-3V9z" fill="#a89800" /><path d="M10 6l5 3-5 3-5-3z" fill="#fff9b0" /><path d="M5 9l5 3v6l-5-3z" fill="#f2de20" /></g>],
  ["Environments", <g key="d" fill="none" strokeWidth="2"><circle cx="7" cy="10" r="2" stroke="#fff" /><circle cx="13" cy="13" r="2" stroke="#f2c51e" /><circle cx="13" cy="13" r="4" stroke="#f2c51e" strokeWidth="2" strokeDasharray="2 1.100" /><circle cx="7" cy="10" r="3" stroke="#fff" strokeWidth="2" strokeDasharray="1.500 .8" /></g>],
  ["Selection", <path key="e" d="M7 6v10l3-2 2 4 2-1-2-4h3z" fill="#fff" />],
];
function PaletteIcon({ children }: { children: React.ReactNode }) {
  return (
    <Plain width="20" height="20" viewBox="0 0 20 20" aria-hidden="true">
      <rect x=".5" y=".5" width="19" height="19" fill="#5d5d5d" stroke="#fff" />
      <rect x="1" y="1" width="18" height="2" fill={B} />
      <path d="M13 2h2M16 2h2" stroke="#234" />
      <path d="M1 3.500h18" stroke="#fff" />
      {children}
    </Plain>
  );
}

const OpenLock = () => (
  <Plain width="9" height="10" viewBox="0 0 9 10" aria-hidden="true">
    <path d="M0 5h6v5H0z" fill="#aaa" />
    <path d="M4 5V2c0-2 4-2 4 0v2" fill="none" stroke="#aaa" />
  </Plain>
);

function Combo({ w, value, center, label }: { w: number; value: string; center?: boolean; label: string }) {
  return (
    <>
      <Field $w={w} $center={center} aria-label={label} defaultValue={value}>
        <option>{value}</option>
      </Field>
      <ArrowBox><Tri /></ArrowBox>
    </>
  );
}

export default function App() {
  const [open, setOpen] = useState(true);
  return (
    <Shell>
      <Global />
      <TitleBar>
        <Plain width="16" height="16" viewBox="0 0 16 16" aria-hidden="true">
          <rect width="16" height="16" fill="#858b8b" />
          <rect width="16" height="6" fill="#a0a5a5" />
          <path d="M1 3.500h14M4 8.500h8M4 13h8" stroke="#d8d8d8" strokeDasharray="2 1" />
        </Plain>
        <Title>TurboCAD 2021 Platinum 64-bit - [Drawing1 World Plan]</Title>
        <WindowButtons>
          <WindowButton type="button" aria-label="Minimize" $w={46}>
            <Plain width="10" height="10"><path d="M0 5.500h10" stroke="#000" /></Plain>
          </WindowButton>
          <WindowButton type="button" aria-label="Restore" $w={46}>
            <Plain width="10" height="10"><path d="M.5 2.500h7v7h-7zM2.500 2.500v-2h7v7h-2" fill="none" stroke="#000" /></Plain>
          </WindowButton>
          <WindowButton type="button" aria-label="Close" $w={46}>
            <Plain width="10" height="10"><path d="M0 0l10 10M10 0L0 10" stroke="#000" /></Plain>
          </WindowButton>
        </WindowButtons>
      </TitleBar>

      <MenuBar>
        <Grip />
        {menusBefore.map(([m, w]) => <MenuButton type="button" key={m} $w={w}>{m}</MenuButton>)}
        <MenuSlot>
          <MenuButton type="button" $w={42} $open={open} aria-expanded={open} onClick={() => setOpen(!open)}>Tools</MenuButton>
          {open && <ToolsMenu />}
        </MenuSlot>
        {menusAfter.map(([m, w]) => <MenuButton type="button" key={m} $w={w}>{m}</MenuButton>)}
        <Spacer />
        <WindowButton type="button" aria-label="Minimize drawing" $w={16}>
          <Plain width="9" height="9"><path d="M1 8h7" stroke="#fff" strokeWidth="2" /></Plain>
        </WindowButton>
        <WindowButton type="button" aria-label="Restore drawing" $w={16}>
          <Plain width="9" height="9"><path d="M.5 4.500h5v4h-5zM2.500 4V1.500h6v4H6" fill="none" stroke="#fff" /><path d="M2 1h7M0 4h6" stroke="#fff" strokeWidth="2" /></Plain>
        </WindowButton>
        <WindowButton type="button" aria-label="Close drawing" $w={16}>
          <Plain width="9" height="9"><path d="M1 1l7 7M8 1L1 8" stroke="#fff" strokeWidth="2" /></Plain>
        </WindowButton>
      </MenuBar>

      <Toolbars>
        <Toolbar>
          <Grip />
          <Tools list={standardTools} />
          <Combo w={286} value="Normal Lines" label="Style" />
          <Tools list={[["help", "Context help", true], ["book", "Manual"], ["mail", "Send by e-mail"]]} />
        </Toolbar>
        <Toolbar>
          <Grip />
          <Tools list={[["gear", "Options"], ["layers", "Layers"]]} />
          <LayerField>
            <Plain width="18" height="16" viewBox="0 0 18 16" aria-hidden="true">
              <path d="M2 8c3-5 10-5 13 0-3 4-10 4-13 0z" fill="#fff" />
              <circle cx="8" cy="8" r="3" fill="#2560c8" /><circle cx="8" cy="8" r="1" />
              <path d="M1 6c4-5 11-5 15 1" fill="none" stroke="#bbb" />
            </Plain>
            <Plain width="12" height="16" viewBox="0 0 12 16" aria-hidden="true">
              <circle cx="5" cy="10" r="4" fill="#ddd" />
              <path d="M7 8V3c0-2 4-2 4 0v2" fill="none" stroke="#ddd" />
            </Plain>
            <Plain width="18" height="18" viewBox="0 0 18 18" aria-hidden="true">
              <path d="M.5.5h16v16H.5z" fill="#000" stroke="#fff" />
            </Plain>
            <LayerSelect aria-label="Layer" defaultValue="0"><option>0</option></LayerSelect>
          </LayerField>
          <ArrowBox><Tri /></ArrowBox>
          <Combo w={83} value="Black" center label="Pen colour" />
          <Combo w={83} value="──────────" label="Pen pattern" />
          <Combo w={83} value="0 in" label="Pen width" />
          <Combo w={101} value="By Pen" center label="Brush colour" />
          <Combo w={83} value="None" label="Brush pattern" />
          <Divider />
          <Boxed>
            <BoxedSelect aria-label="Print style" disabled />
            <ArrowBox $dim><Tri /></ArrowBox>
          </Boxed>
          <Boxed>
            <BoxedSelect $fill aria-label="Material" disabled />
            <ArrowBox $dim><Tri /></ArrowBox>
          </Boxed>
          <Tools list={[["pencil", "Edit pen"], ["cup", "Render", true]]} />
        </Toolbar>
        <Toolbar>
          <Grip />
          <Tools list={[["hash", "Show grid"]]} />
        </Toolbar>
      </Toolbars>

      <Work>
        <SideBar>
          <Grip $across />
          <Tools across list={drawTools} active="line" />
        </SideBar>
        <Drawing>
          <RulerCorner>
            <Plain width="12" height="14" aria-hidden="true"><path d="M5 2v12M2 5l3-3 3 3M9 11l2 3" fill="none" stroke="#000" /></Plain>
          </RulerCorner>
          <RulerTop><TopRuler /></RulerTop>
          <RulerLeft><LeftRuler /></RulerLeft>
          <Canvas />
          <ScrollV>
            <ScrollButton type="button" aria-label="Scroll up"><Tri dir="up" small /></ScrollButton>
            <Grow $n={111} />
            <ThumbV />
            <Grow $n={298} />
            <ScrollButton type="button" aria-label="Scroll down"><Tri small /></ScrollButton>
          </ScrollV>
          <SheetBar>
            <SheetTabs>
              <SheetTab type="button" $on>
                <Plain width="14" height="12" viewBox="0 0 14 12" aria-hidden="true">
                  <path d="M2 1h6v5H2z" fill="#222" stroke="#fff" /><circle cx="8" cy="8" r="3" fill="#ddd" stroke="#000" />
                </Plain>
                Model
              </SheetTab>
              <SheetTab type="button">
                <Plain width="13" height="12" viewBox="0 0 13 12" aria-hidden="true">
                  <path d="M2 0h6l3 3v9H2z" fill="#fff" /><path d="M5 5l2-1v6" fill="none" stroke="#006" />
                </Plain>
                Paper 1
              </SheetTab>
            </SheetTabs>
            <Splitter />
            <ScrollH>
              <Grow $n={478} />
              <ThumbH />
              <Grow $n={411} />
              <ScrollButton type="button" aria-label="Scroll right"><Tri dir="right" small /></ScrollButton>
            </ScrollH>
          </SheetBar>
        </Drawing>
        <PaletteRail>
          {paletteArt.map(([name, art]) => (
            <PaletteTab type="button" key={name} aria-label={name}><PaletteIcon>{art}</PaletteIcon></PaletteTab>
          ))}
          <PaletteTab type="button" $on>
            <PaletteIcon>
              <ellipse cx="10" cy="15" rx="6" ry="2" fill={B} />
              <path d="M6 8h8c0 4-1 6-3 6H9c-2 0-3-2-3-6z" fill="#ffe92e" />
              <path d="M10 8h4c0 4-1 6-3 6h-1z" fill="#f6a540" />
            </PaletteIcon>
            Advanced Rendering Styles
          </PaletteTab>
        </PaletteRail>
        <SideBar>
          <Grip $across />
          <Tools across list={modifyTools} />
        </SideBar>
      </Work>

      <Inspector>
        <Grip />
        <Tools list={[["polyTool", "Polyline"], ["cross", "Cancel"], ["table", "Properties table"], SEP]} />
        <Params>
          <Param>
            <ParamName><OpenLock />Length</ParamName>
            <ParamBox><BareInput defaultValue="0 in" /></ParamBox>
          </Param>
          <Param>
            <ParamName><OpenLock />Angle</ParamName>
            <ParamBox>
              <BareInput defaultValue="0" />
              <Spin><SpinHalf><Tri dir="up" small /></SpinHalf><SpinHalf><Tri small /></SpinHalf></Spin>
            </ParamBox>
          </Param>
        </Params>
      </Inspector>
      <StatusBar>
        Define the start point of the line
        <Spacer />
        <StatusMode type="button">SNAP</StatusMode>
        <StatusMode type="button">GEO</StatusMode>
        {[["X", "1.462102 in"], ["Y", "5.887418 in"], ["Z", "0 in"]].map(([axis, value]) => (
          <Coord key={axis}>
            <CoordLock><Check type="checkbox" disabled={axis === "Z"} />{axis}</CoordLock>
            <CoordInput aria-label={axis} defaultValue={value} disabled={axis === "Z"} />
          </Coord>
        ))}
        <Zoom>213%</Zoom>
        <Clock>2:37 PM</Clock>
      </StatusBar>
    </Shell>
  );
}
